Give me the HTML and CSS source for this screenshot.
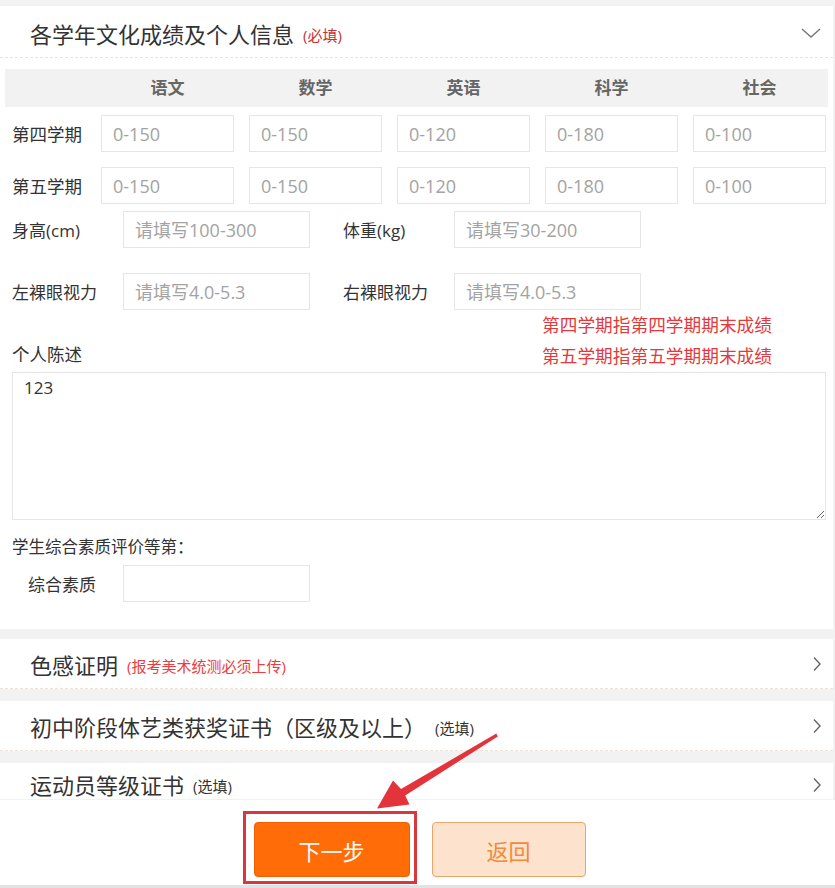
FILE: index.html
```html
<!DOCTYPE html>
<html lang="zh-CN">
<head>
    <meta charset="UTF-8">
    <meta name="viewport" content="width=device-width, initial-scale=1.0">
    <title>报名信息</title>
    <link rel="stylesheet" href="styles.css">
</head>
<body>
    <div class="page">
        <div class="content">
            <section class="panel">
                <div class="panel-head">
                    <h3 class="panel-title">各学年文化成绩及个人信息<span class="tip">(必填)</span></h3>
                    <svg class="arrow-down" width="20" height="10" viewBox="0 0 20 10"><polyline points="1,1 10,9 19,1" fill="none" stroke="#777" stroke-width="1.4"/></svg>
                </div>
                <div class="panel-body">
                    <div class="score-head">
                        <span></span>
                        <span>语文</span>
                        <span>数学</span>
                        <span>英语</span>
                        <span>科学</span>
                        <span>社会</span>
                    </div>
                    <div class="score-row">
                        <label>第四学期</label>
                        <input type="text" placeholder="0-150">
                        <input type="text" placeholder="0-150">
                        <input type="text" placeholder="0-120">
                        <input type="text" placeholder="0-180">
                        <input type="text" placeholder="0-100">
                    </div>
                    <div class="score-row second">
                        <label>第五学期</label>
                        <input type="text" placeholder="0-150">
                        <input type="text" placeholder="0-150">
                        <input type="text" placeholder="0-120">
                        <input type="text" placeholder="0-180">
                        <input type="text" placeholder="0-100">
                    </div>
                    <div class="field-row body-row">
                        <label>身高(cm)</label>
                        <input type="text" placeholder="请填写100-300">
                        <label class="next">体重(kg)</label>
                        <input type="text" placeholder="请填写30-200">
                    </div>
                    <div class="field-row eye-row">
                        <label>左裸眼视力</label>
                        <input type="text" placeholder="请填写4.0-5.3">
                        <label class="next">右裸眼视力</label>
                        <input type="text" placeholder="请填写4.0-5.3">
                    </div>
                    <div class="desc-head">
                        <label>个人陈述</label>
                        <div class="notes">
                            <p>第四学期指第四学期期末成绩</p>
                            <p>第五学期指第五学期期末成绩</p>
                        </div>
                    </div>
                    <textarea class="desc">123</textarea>
                    <p class="sub-title">学生综合素质评价等第：</p>
                    <div class="field-row quality-row">
                        <label>综合素质</label>
                        <input type="text">
                    </div>
                </div>
            </section>

            <section class="panel fold first">
                <h3 class="panel-title">色感证明<span class="tip red">(报考美术统测必须上传)</span></h3>
                <svg class="arrow-right" width="10" height="16" viewBox="0 0 10 16"><polyline points="2,1.5 8,8 2,14.5" fill="none" stroke="#666" stroke-width="1.4"/></svg>
            </section>
            <section class="panel fold">
                <h3 class="panel-title">初中阶段体艺类获奖证书（区级及以上）<span class="tip gray">(选填)</span></h3>
                <svg class="arrow-right" width="10" height="16" viewBox="0 0 10 16"><polyline points="2,1.5 8,8 2,14.5" fill="none" stroke="#666" stroke-width="1.4"/></svg>
            </section>
            <section class="panel fold last">
                <h3 class="panel-title">运动员等级证书<span class="tip gray">(选填)</span></h3>
                <svg class="arrow-right" width="10" height="16" viewBox="0 0 10 16"><polyline points="2,1.5 8,8 2,14.5" fill="none" stroke="#666" stroke-width="1.4"/></svg>
            </section>
        </div>

        <div class="footer">
            <button class="btn primary">下一步</button>
            <button class="btn plain">返回</button>
        </div>

        <!-- 截图标注 -->
        <div class="mark-box"></div>
        <svg class="mark-arrow" width="835" height="888" viewBox="0 0 835 888">
            <polygon points="496.3,733.6 401,789 393,780.5 377,808.5 409.5,804.5 405.2,795.5 497.8,736.4" fill="#e3343b"/>
        </svg>
    </div>
</body>
</html>
```

FILE: styles.css
```css
*{
    margin: 0px;
    padding: 0px;
    box-sizing: border-box;
}
body{
    font-family: "Open Sans", "Noto Sans CJK SC", sans-serif;
    color: #333333;
    background: #f2f2f2;
}
.page{
    position: relative;
    height: 888px;
    display: flex;
    flex-direction: column;
    overflow: hidden;
}
.content{
    flex: 1;
    overflow: hidden;
    padding: 6px 2px 0 0;
}
.panel{
    background: #ffffff;
}
.panel-head{
    height: 52px;
    display: flex;
    align-items: center;
    justify-content: space-between;
    padding: 2px 12px 0 30px;
    border-bottom: 1px dashed #f0e2d4;
}
.panel-title{
    font-size: 22px;
    font-weight: normal;
    color: #333333;
    display: flex;
    align-items: center;
}
.tip{
    font-size: 15px;
    color: #c8323a;
    margin-left: 9px;
    padding-top: 3px;
}
.tip.red{
    color: #ee3b3b;
}
.tip.gray{
    color: #333333;
    margin-left: 9px;
}
.panel-body{
    padding: 11px 5px 27px 5px;
}
.score-head{
    display: grid;
    grid-template-columns: 81px repeat(5, 133px);
    column-gap: 15px;
    height: 38px;
    line-height: 38px;
    background: #f2f2f2;
    width: 823px;
}
.score-head > span{
    text-align: center;
    font-size: 17px;
    font-weight: bold;
    color: #666666;
}
.score-row{
    display: grid;
    grid-template-columns: 81px repeat(5, 133px);
    column-gap: 15px;
    align-items: center;
    margin-top: 8px;
}
.score-row.second{
    margin-top: 15px;
}
.score-row > label{
    padding-left: 7px;
    font-size: 17.5px;
    white-space: nowrap;
}
.score-row > input{
    width: 100%;
}
input, .desc{
    height: 37px;
    border: 1px solid #e6e6e6;
    padding: 0 11px;
    font-family: "Open Sans", "Noto Sans CJK SC", sans-serif;
    font-size: 18px;
    color: #333333;
    outline: none;
    background: #ffffff;
}
input::placeholder{
    color: #a3a3a3;
}
.field-row{
    display: flex;
    align-items: center;
}
.field-row > label{
    width: 118px;
    padding-left: 7px;
    font-size: 17px;
}
.field-row > label.next{
    width: 111px;
    margin-left: 33px;
    padding-left: 0;
}
.field-row > input{
    width: 187px;
    font-size: 18px;
}
.body-row{
    margin-top: 7px;
}
.eye-row{
    margin-top: 25px;
}
.desc-head{
    display: flex;
    justify-content: space-between;
    align-items: flex-end;
}
.desc-head > label{
    padding-left: 7px;
    font-size: 17.5px;
    line-height: 24px;
    margin-bottom: 6px;
}
.notes{
    padding-right: 56px;
}
.notes > p{
    font-size: 17.7px;
    line-height: 31px;
    color: #e5383b;
}
.desc{
    display: block;
    width: 814px;
    height: 148px;
    margin-left: 7px;
    padding: 3px 11px;
    font-size: 17px;
    resize: vertical;
}
.sub-title{
    margin-top: 15px;
    padding-left: 7px;
    font-size: 16.5px;
    line-height: 24px;
}
.quality-row{
    margin-top: 6px;
}
.quality-row > label{
    padding-left: 23px;
}
.fold{
    height: 50px;
    display: flex;
    align-items: center;
    justify-content: space-between;
    padding: 0 11px 0 30px;
    border-bottom: 1px dashed #f0e2d4;
    margin-top: 12px;
}
.fold.first{
    margin-top: 10px;
}
.fold.last{
    height: 36px;
    align-items: flex-end;
    border-bottom: none;
}
.fold.last > .panel-title{
    line-height: 26px;
}
.fold.last > .arrow-right{
    margin-bottom: 6px;
}
.footer{
    height: 88px;
    background: #ffffff;
    display: flex;
    justify-content: center;
    gap: 22px;
    padding: 22px 0 0 4px;
    border-bottom: 3px solid #e2e2e2;
}
.btn{
    width: 156px;
    height: 55px;
    border-radius: 4px;
    font-family: "Open Sans", "Noto Sans CJK SC", sans-serif;
    font-size: 22px;
    cursor: pointer;
}
.primary{
    background: #ff6c08;
    border: 1px solid #f06000;
    color: #ffffff;
}
.plain{
    width: 154px;
    background: #fde2cd;
    border: 1px solid #eaa56a;
    color: #f08a3c;
}
.mark-box{
    position: absolute;
    left: 243px;
    top: 811px;
    width: 174px;
    height: 73px;
    border: 3px solid #d8373d;
}
.mark-arrow{
    position: absolute;
    left: 0;
    top: 0;
    pointer-events: none;
}
```
